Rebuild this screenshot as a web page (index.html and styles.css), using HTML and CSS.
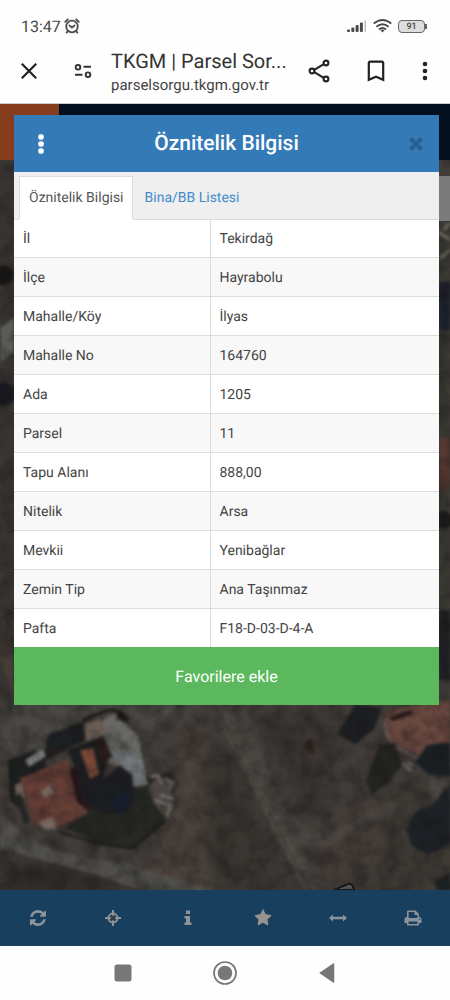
FILE: index.html
```html
<!DOCTYPE html>
<html lang="tr">
<head>
    <meta charset="UTF-8">
    <meta name="viewport" content="width=device-width, initial-scale=1.0">
    <title>TKGM | Parsel Sorgu</title>
    <link rel="stylesheet" href="styles.css">
</head>
<body>
    <div class="status-bar">
        <span class="clock">13:47</span>
        <svg class="alarm" width="16" height="16" viewBox="0 0 16 16" fill="none" stroke="#4a4a4a" stroke-width="1.8" stroke-linecap="round">
            <circle cx="8" cy="8.5" r="5.8"/>
            <path d="M1.2 3.8 3.8 1.4M14.8 3.8 12.2 1.4M5.5 7.5 8 9.5 10.5 7.5M3.5 13.5 2.7 14.6M12.5 13.5 13.3 14.6"/>
        </svg>
        <div class="status-icons">
            <svg width="20" height="13" viewBox="0 0 20 13" fill="#4a4a4a">
                <rect x="0" y="9.5" width="3" height="2.5" rx="1"/>
                <rect x="4.3" y="7.5" width="3" height="4.5" rx="1"/>
                <rect x="8.6" y="5" width="3" height="7" rx="1"/>
                <rect x="12.9" y="2.5" width="3" height="9.5" rx="1"/>
                <rect x="17.5" y="0.5" width="1.5" height="11.5" rx="0.7" fill="#bbb"/>
            </svg>
            <svg width="19" height="14" viewBox="0 0 19 14" fill="none" stroke="#4a4a4a" stroke-width="1.9">
                <path d="M0.7 4.6Q9.5-2.6 18.3 4.6M3.4 7.7Q9.5 2.6 15.6 7.7M6 10.5Q9.5 7.4 13 10.5"/>
                <path d="M7.5 11.3Q9.5 9.8 11.5 11.3L9.5 13.5Z" fill="#4a4a4a" stroke="none"/>
            </svg>
            <span class="battery">91</span>
        </div>
    </div>

    <header class="browser-bar">
        <button class="icon-btn" aria-label="Kapat">
            <svg width="18" height="18" viewBox="0 0 18 18" stroke="#222" stroke-width="2.2"><path d="M1.8 1.8 16.2 16.2M16.2 1.8 1.8 16.2"/></svg>
        </button>
        <button class="icon-btn site-info" aria-label="Site bilgileri">
            <svg width="18" height="14" viewBox="0 0 18 14" fill="none" stroke="#333" stroke-width="1.9">
                <circle cx="4" cy="3.3" r="2.3"/>
                <path d="M9.5 2.8H17M1 10.8H8.5"/>
                <circle cx="14" cy="10.7" r="2.3"/>
            </svg>
        </button>
        <div class="page-info">
            <span class="page-title">TKGM | Parsel Sor...</span>
            <span class="page-url">parselsorgu.tkgm.gov.tr</span>
        </div>
        <div class="browser-actions">
            <button class="icon-btn" aria-label="Paylaş">
                <svg width="22" height="24" viewBox="0 0 22 24" fill="none" stroke="#222" stroke-width="2.1">
                    <path d="M6.2 10.8 15.8 5.2M6.2 13.2 15.8 18.8"/>
                    <circle cx="4" cy="12" r="2.4"/>
                    <circle cx="18" cy="4" r="2.4"/>
                    <circle cx="18" cy="20" r="2.4"/>
                </svg>
            </button>
            <button class="icon-btn" aria-label="Yer işareti">
                <svg width="18" height="22" viewBox="0 0 18 22" fill="none" stroke="#222" stroke-width="2.2"><path d="M1.8 3.2Q1.8 1.7 3.3 1.7H14.7Q16.2 1.7 16.2 3.2V19.8L9 16.8 1.8 19.8Z"/></svg>
            </button>
            <button class="icon-btn" aria-label="Menü">
                <svg width="6" height="20" viewBox="0 0 6 20" fill="#222"><circle cx="3" cy="3" r="2.3"/><circle cx="3" cy="10" r="2.3"/><circle cx="3" cy="17" r="2.3"/></svg>
            </button>
        </div>
    </header>

    <main class="page">
        <svg class="map" viewBox="0 104 450 786" preserveAspectRatio="xMidYMax slice" aria-hidden="true" color-interpolation-filters="sRGB">
            <defs>
                <filter id="soft" x="0" y="0" width="1" height="1">
                    <feGaussianBlur stdDeviation="1.7"/>
                </filter>
                <filter id="haze">
                    <feGaussianBlur stdDeviation="7"/>
                </filter>
                <filter id="ground" x="0" y="0" width="1" height="1">
                    <feTurbulence type="fractalNoise" baseFrequency="0.06" numOctaves="4" seed="8"/>
                    <feColorMatrix values="0 0 0 0 0.08  0 0 0 0 0.07  0 0 0 0 0.07  1.6 0 0 0 -0.55"/>
                </filter>
            </defs>
            <rect y="104" width="450" height="786" fill="#423d39"/>
            <!-- soil tones -->
            <g filter="url(#haze)">
                <path d="M0 700H200L160 735 110 720 40 755 0 790Z" fill="#4a4843"/>
                <path d="M185 730 205 735 205 810 250 890H140L165 850Z" fill="#4d433d"/>
                <path d="M205 740 240 760 290 890H215L200 820Z" fill="#393631"/>
                <path d="M260 710 340 715 330 810 300 820Z" fill="#3b3632"/>
                <path d="M0 858 70 865 150 895H0Z" fill="#302d29"/>
                <path d="M380 790 450 770V890H340Z" fill="#3d3934"/>
                <path d="M330 820 400 790 380 860 320 880Z" fill="#453d38"/>
                <path d="M0 160H15V700H0Z" fill="#33312f"/>
                <path d="M435 220H450V700H435Z" fill="#383732"/>
            </g>
            <g filter="url(#soft)">
                <!-- roads -->
                <path d="M0 805Q10 830 45 845T120 862L225 893H150L90 873 0 848Z" fill="#504f4a"/>
                <path d="M218 705 245 708 275 790Q300 835 330 832L400 797 395 812 330 845 300 848 318 890H305L270 825Z" fill="#4a4540"/>
                <path d="M224 728 306 890M238 748 314 890" stroke="#57524c" stroke-width="2" fill="none"/>
                <path d="M0 328 14 318V352L0 362Z" fill="#5b5b55"/>
                <!-- farm yard -->
                <path d="M65 828 95 800 140 778 172 772 176 808 135 849 95 842Z" fill="#262823"/>
                <path d="M8 760 35 750 50 770 20 785 25 815 10 800Z" fill="#1d201f"/>
                <path d="M25 773 75 745 130 720 126 714 80 722 50 735 45 750Z" fill="#211f1f"/>
                <path d="M46 748Q45 732 60 730L68 745ZM63 744Q68 725 84 725V740Z" fill="#1b1f23"/>
                <path d="M25 760 43 749 46 756 29 767Z" fill="#7b7d7e"/>
                <path d="M84 728 115 714 138 735 148 785 130 788 126 770 108 762 104 738 86 741Z" fill="#686965"/>
                <path d="M110 752 138 750 147 782 131 787 124 768Z" fill="#75797b"/>
                <path d="M84 724 100 718 107 731 86 741Z" fill="#6a5b54"/>
                <path d="M82 720 110 710 122 712" stroke="#1b1817" stroke-width="3" fill="none"/>
                <circle cx="121" cy="716" r="4" fill="#1b1817"/>
                <path d="M20 778 68 759 88 813 56 829 33 823Z" fill="#673f37"/>
                <path d="M68 750 100 737 108 755 104 779 120 765 132 775 135 800 125 812 103 815 85 803 78 775Z" fill="#1c1e22"/>
                <path d="M80 750 93 748 99 774 90 779Z" fill="#784737"/>
                <path d="M94 742 103 735 112 756 104 765Z" fill="#2b1c1b"/>
                <path d="M73 768 80 800 90 808" stroke="#27171a" stroke-width="7" fill="none"/>
                <path d="M112 802 122 788 132 800 122 814Z" fill="#172033"/>
                <path d="M148 787 158 775 172 783 175 808 165 818 153 802Z" fill="#4b4541"/>
                <path d="M150 777 158 775 162 784M165 778 173 783 169 790M155 800 170 805 167 817M160 795 174 799" stroke="#706c67" stroke-width="3" fill="none"/>
                <path d="M15 785 22 782 24 797 16 800ZM40 792 50 784 54 793 45 798ZM38 822 53 817 57 829 44 829Z" fill="#756860"/>
                <path d="M60 832 95 843 133 849 165 821" stroke="#171a16" stroke-width="2" fill="none"/>
                <path d="M18 795 27 823" stroke="#222623" stroke-width="6" fill="none"/>
                <!-- eastern house and trees -->
                <path d="M386 712 410 706 450 700V742L420 756 400 746 386 739Z" fill="#6b4940"/>
                <path d="M386 718Q380 738 405 752L425 762" stroke="#6b615c" stroke-width="2" fill="none"/>
                <path d="M390 718 400 713 413 710 411 715 392 721Z" fill="#271b19"/>
                <path d="M337 735 355 704 382 708 375 728 356 744Z" fill="#1d2023"/>
                <path d="M380 745 395 743 402 765 389 782 372 795 366 780Z" fill="#23241f"/>
                <path d="M415 762 427 745 450 742V777L428 774Z" fill="#1b1f24"/>
                <path d="M406 829 415 812 433 804 450 785V844L428 855 412 846Z" fill="#1e2227"/>
                <path d="M430 777 446 782 437 800 429 794Z" fill="#504c47"/>
                <path d="M403 763 411 771M408 761 412 766" stroke="#777470" stroke-width="3"/>
                <path d="M305 742 312 738 314 755 306 750Z" fill="#30211d"/>
                <path d="M435 881 450 873V890H437Z" fill="#1d2223"/>
                <!-- strips beside the dialog -->
                <circle cx="3" cy="275" r="10" fill="#181716"/>
                <circle cx="3" cy="394" r="12" fill="#191a22"/>
                <path d="M0 605 14 660V700L0 660Z" fill="#443c36"/>
                <path d="M439 232 450 240M440 258 450 250M444 230 450 222" stroke="#77736d" stroke-width="3"/>
                <path d="M439 282H450V330H439Z" fill="#1c202b"/>
                <path d="M439 438H450V486L439 492Z" fill="#573932"/>
                <circle cx="444" cy="520" r="9" fill="#1d1c19"/>
                <path d="M439 610H450V680H439Z" fill="#1d2023"/>
            </g>
            <path d="M334 890 348 884Q353 883 354 890Z" fill="#666b6c" stroke="#181818" stroke-width="2"/>
            <rect y="104" width="450" height="786" filter="url(#ground)" opacity="0.5"/>
        </svg>
        <div class="site-header"><span class="site-logo"></span></div>
        <div class="map-control"></div>

        <section class="modal" role="dialog" aria-labelledby="modalTitle">
            <div class="modal-header">
                <button class="icon-btn modal-menu" aria-label="Seçenekler">
                    <svg width="6" height="20" viewBox="0 0 6 20" fill="#fff"><rect x="0.3" y="0.3" width="5.4" height="5.4" rx="2"/><rect x="0.3" y="7.3" width="5.4" height="5.4" rx="2"/><rect x="0.3" y="14.3" width="5.4" height="5.4" rx="2"/></svg>
                </button>
                <h1 id="modalTitle">Öznitelik Bilgisi</h1>
                <button class="icon-btn modal-close" aria-label="Kapat">
                    <svg width="14" height="14" viewBox="0 0 14 14" stroke="#285f90" stroke-width="4"><path d="M1.5 1.5 12.5 12.5M12.5 1.5 1.5 12.5"/></svg>
                </button>
            </div>
            <nav class="tabs">
                <a href="#oznitelik" class="tab active">Öznitelik Bilgisi</a>
                <a href="#bina" class="tab">Bina/BB Listesi</a>
            </nav>
            <table class="info-table" id="oznitelik">
                <tbody>
                    <tr><th scope="row">İl</th><td>Tekirdağ</td></tr>
                    <tr><th scope="row">İlçe</th><td>Hayrabolu</td></tr>
                    <tr><th scope="row">Mahalle/Köy</th><td>İlyas</td></tr>
                    <tr><th scope="row">Mahalle No</th><td>164760</td></tr>
                    <tr><th scope="row">Ada</th><td>1205</td></tr>
                    <tr><th scope="row">Parsel</th><td>11</td></tr>
                    <tr><th scope="row">Tapu Alanı</th><td>888,00</td></tr>
                    <tr><th scope="row">Nitelik</th><td>Arsa</td></tr>
                    <tr><th scope="row">Mevkii</th><td>Yenibağlar</td></tr>
                    <tr><th scope="row">Zemin Tip</th><td>Ana Taşınmaz</td></tr>
                    <tr><th scope="row">Pafta</th><td>F18-D-03-D-4-A</td></tr>
                </tbody>
            </table>
            <button class="favorite-btn">Favorilere ekle</button>
        </section>
    </main>

    <nav class="toolbar">
        <button aria-label="Yenile">
            <svg width="16" height="16" viewBox="0 0 1536 1536"><path d="M1511 928q0 5-1 7-64 268-268 434.5t-478 166.5q-146 0-282.5-55t-243.5-157l-129 129q-19 19-45 19t-45-19-19-45v-448q0-26 19-45t45-19h448q26 0 45 19t19 45-19 45l-137 137q71 66 161 102t187 36q134 0 250-65t186-179q11-17 53-117 8-23 30-23h192q13 0 22.5 9.5t9.5 22.5zm25-800v448q0 26-19 45t-45 19h-448q-26 0-45-19t-19-45 19-45l138-138q-148-137-349-137-134 0-250 65t-186 179q-11 17-53 117-8 23-30 23h-199q-13 0-22.5-9.5t-9.5-22.5v-7q65-268 270-434.5t480-166.5q146 0 284 55.5t245 156.5l130-129q19-19 45-19t45 19 19 45z"/></svg>
        </button>
        <button aria-label="Konumum">
            <svg width="16" height="16" viewBox="0 0 16 16">
                <path d="M7 0H9V2.5Q12.5 3.5 13.5 7H16V9H13.5Q12.5 12.5 9 13.5V16H7V13.5Q3.5 12.5 2.5 9H0V7H2.5Q3.5 3.5 7 2.5Z"/>
                <path d="M5.4 5.4 10.6 10.6M10.6 5.4 5.4 10.6" stroke="#303c48" stroke-width="2.6"/>
            </svg>
        </button>
        <button aria-label="Bilgi">
            <svg width="8" height="16" viewBox="0 0 8 16"><path d="M2 0.5H6V4H2ZM0.5 6H6V12.5H7.5V15H0.5V12.5H2V8.5H0.5Z"/></svg>
        </button>
        <button aria-label="Favoriler">
            <svg width="18" height="18" viewBox="0 0 1792 1792"><path class="warm" d="M1728 647q0 22-26 48l-363 354 86 500q1 7 1 20 0 21-10.5 35.5t-30.5 14.5q-19 0-40-12l-449-236-449 236q-22 12-40 12-21 0-31.5-14.5t-10.5-35.5q0-6 2-20l86-500-364-354q-25-27-25-48 0-37 56-46l502-73 225-455q19-41 49-41t49 41l225 455 502 73q56 9 56 46z"/></svg>
        </button>
        <button aria-label="Ölçüm">
            <svg width="18" height="8" viewBox="0 0 18 8"><path d="M0 4 4 0.5V2.8H14V0.5L18 4 14 7.5V5.2H4V7.5Z"/></svg>
        </button>
        <button aria-label="Yazdır">
            <svg width="18" height="16" viewBox="0 0 18 16"><path fill-rule="evenodd" d="M3 7V1.5Q3 0.5 4 0.5H11.5L15 4V7Q17.5 7 17.5 9.5V13H15V15.5H3V13H0.5V9.5Q0.5 7 3 7ZM4.6 2V8H13.4V5H10.5V2ZM4.6 11.5V14H13.4V11.5ZM15 8.7V10H16.2V8.7Z"/></svg>
        </button>
    </nav>

    <nav class="android-nav">
        <button aria-label="Son uygulamalar">
            <svg width="18" height="18" viewBox="0 0 18 18" fill="#777"><rect x="0.5" y="0.5" width="17" height="17" rx="2.5"/></svg>
        </button>
        <button aria-label="Ana ekran">
            <svg width="24" height="24" viewBox="0 0 24 24"><circle cx="12" cy="12" r="11" fill="none" stroke="#777" stroke-width="1.7"/><circle cx="12" cy="12" r="7.3" fill="#777"/></svg>
        </button>
        <button aria-label="Geri">
            <svg width="16" height="20" viewBox="0 0 16 20"><path d="M1.3 10 14.5 1V19Z" fill="#777" stroke="#777" stroke-width="1.5" stroke-linejoin="round"/></svg>
        </button>
    </nav>
</body>
</html>
```

FILE: styles.css
```css
* {
    box-sizing: border-box;
}

body {
    font-family: Roboto, 'Liberation Sans', sans-serif;
    font-size: 14px;
    text-rendering: geometricPrecision;
    color: #444;
    background: #fefefe;
    display: flex;
    flex-direction: column;
    min-height: 100vh;
    margin: 0;
}

button {
    font-family: inherit;
    text-rendering: inherit;
    border: none;
    background: none;
    padding: 0;
    cursor: pointer;
}

svg {
    display: block;
}

.icon-btn {
    display: flex;
    align-items: center;
    justify-content: center;
}

/* Status bar */
.status-bar {
    display: flex;
    align-items: center;
    height: 40px;
    padding: 12px 25px 0 21px;
}

.clock {
    font-size: 16px;
    color: #4a4a4a;
}

.alarm {
    margin-left: 3px;
}

.status-icons {
    display: flex;
    align-items: center;
    gap: 6px;
    margin-left: auto;
}

.battery {
    position: relative;
    width: 27px;
    height: 13px;
    border: 1px solid #666;
    border-radius: 4px;
    background: #ddd;
    font-size: 9px;
    font-weight: 500;
    line-height: 12px;
    text-align: center;
}

.battery::after {
    content: "";
    position: absolute;
    right: -3px;
    top: 3px;
    width: 2px;
    height: 5px;
    background: #666;
}

/* Browser bar */
.browser-bar {
    display: flex;
    align-items: center;
    height: 64px;
    padding: 0 22px 2px 20px;
    border-bottom: 1px solid #ccc;
}

.site-info {
    margin: 0 19px 0 36px;
}

.page-info {
    display: flex;
    flex-direction: column;
    flex: 1;
    padding-top: 4px;
    white-space: nowrap;
}

.page-title {
    font-size: 20px;
    line-height: 24px;
    color: #333;
}

.page-url {
    font-size: 15px;
    line-height: 24px;
}

.browser-actions {
    display: flex;
    align-items: center;
    gap: 37px;
}

/* Map page */
.page {
    position: relative;
    flex: 1;
    padding: 11px 11px 40px 14px;
    overflow: hidden;
}

.map {
    position: absolute;
    top: 0;
    left: 0;
    width: 100%;
    height: 100%;
}

.site-header {
    position: absolute;
    top: 0;
    left: 0;
    right: 0;
    height: 56px;
    background: #010f1e;
}

.site-logo {
    display: block;
    width: 59px;
    height: 56px;
    background: #853d1d;
}

.map-control {
    position: absolute;
    top: 72px;
    right: 0;
    width: 24px;
    height: 45px;
    background: #7b7b7b;
}

/* Dialog */
.modal {
    position: relative;
    background: #fff;
}

.modal-header {
    display: flex;
    align-items: center;
    justify-content: space-between;
    height: 57px;
    padding: 0 16px 0 24px;
    background: #337ab7;
}

.modal-header h1 {
    margin: 0;
    font-size: 21px;
    font-weight: 500;
    color: #fff;
}

.tabs {
    display: flex;
    padding: 4px 5px 0;
    height: 48px;
    background: #efefef;
    border-bottom: 1px solid #ddd;
}

.tab {
    padding: 0 8px 0 9px;
    border: 1px solid transparent;
    line-height: 42px;
    margin-right: 2px;
    text-decoration: none;
    color: #428bca;
}

.tab.active {
    height: 44px;
    background: #fff;
    border-color: #ddd;
    border-bottom-color: #fff;
    color: #555;
}

.info-table {
    width: 100%;
    height: 427px;
    border-collapse: collapse;
    table-layout: fixed;
}

.info-table th,
.info-table td {
    padding: 1px 9px 0;
    border-bottom: 1px solid #ddd;
    font-weight: 400;
    text-align: left;
}

.info-table th {
    width: 196px;
    border-right: 1px solid #ddd;
}

.info-table tr:nth-child(even) {
    background: #f8f8f8;
}

.info-table tr:last-child th,
.info-table tr:last-child td {
    border-bottom: none;
}

.favorite-btn {
    display: block;
    width: 100%;
    height: 58px;
    background: #5cb85c;
    color: #fff;
    font-size: 16px;
}

/* Bottom bars */
.toolbar {
    display: grid;
    grid-template-columns: repeat(6, 1fr);
    height: 56px;
    background: #193f5f;
}

.toolbar button,
.android-nav button {
    display: flex;
    align-items: center;
    justify-content: center;
}

.toolbar svg {
    fill: #8b939b;
}

.toolbar .warm {
    fill: #969391;
}

.android-nav {
    display: grid;
    grid-template-columns: repeat(3, 1fr);
    height: 54px;
    padding: 0 16%;
}
```
